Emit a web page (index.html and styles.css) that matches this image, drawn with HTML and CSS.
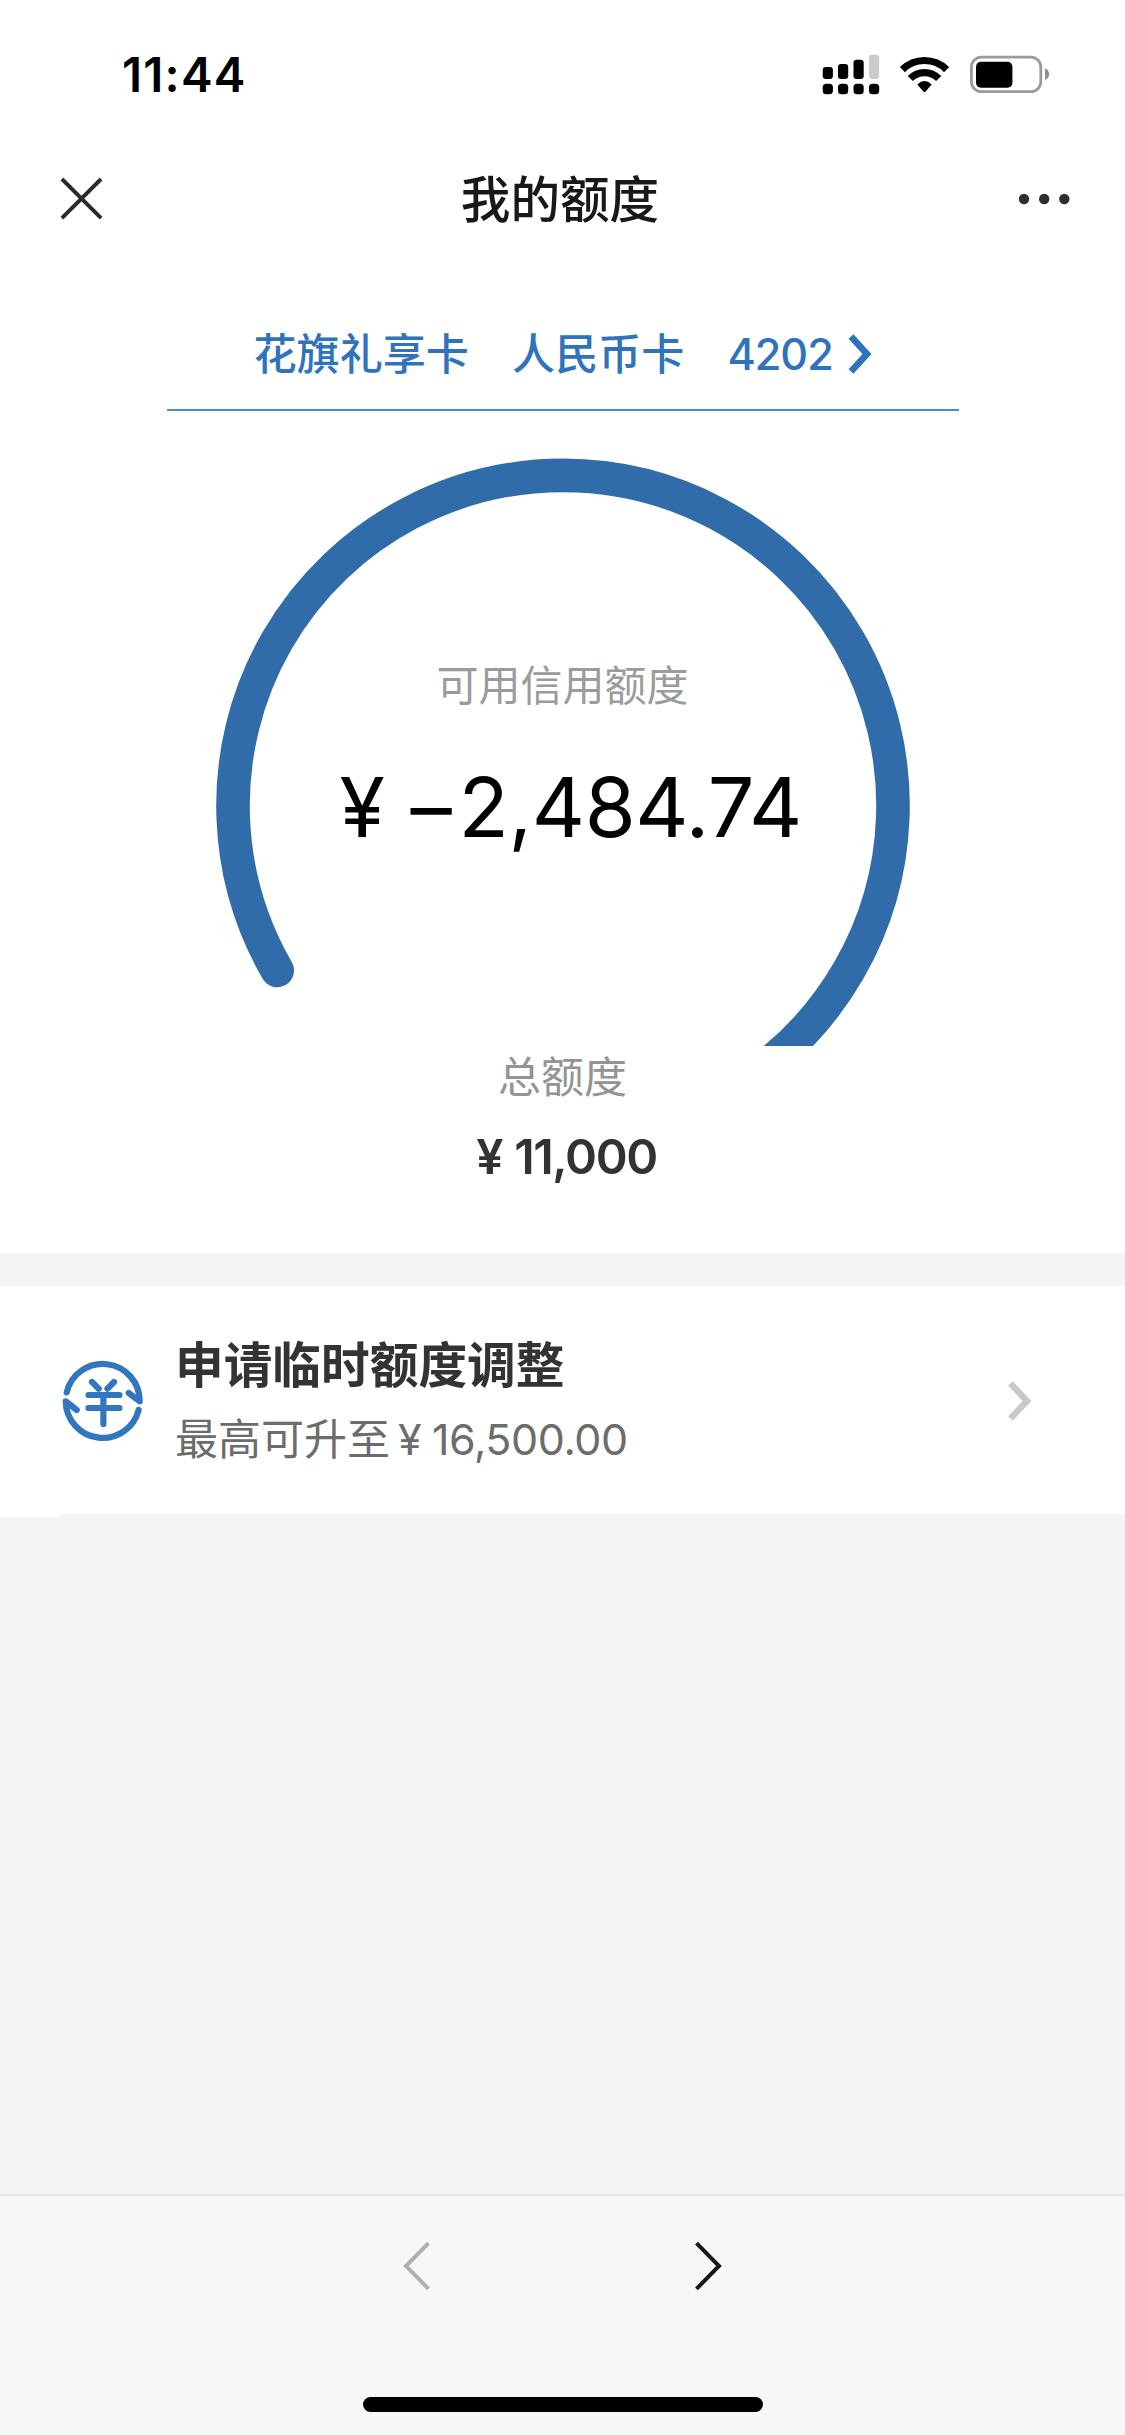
FILE: index.html
```html
<!DOCTYPE html>
<html lang="zh-CN">
<head>
<meta charset="utf-8">
<title>我的额度</title>
<link rel="stylesheet" href="styles.css">
</head>
<body>
<div class="screen">
  <header class="status-bar">
    <span class="clock">11:44</span>
    <svg class="status-icons" viewBox="0 0 240 50" width="240" height="50">
      <g fill="#000">
        <rect x="2.7" y="17" width="10.2" height="12" rx="3"/>
        <rect x="18" y="14" width="10.2" height="15" rx="3"/>
        <rect x="33.5" y="9.7" width="10.2" height="19.3" rx="3"/>
        <rect x="49" y="4.7" width="10.2" height="24.3" rx="3" fill="#cbcbcb"/>
        <rect x="2.7" y="33.7" width="10.2" height="10.6" rx="3.6"/>
        <rect x="18" y="33.7" width="10.2" height="10.6" rx="3.6"/>
        <rect x="33.5" y="33.7" width="10.2" height="10.6" rx="3.6"/>
        <rect x="49" y="33.7" width="10.2" height="10.6" rx="3.6"/>
      </g>
      <g fill="none" stroke="#000" stroke-width="7.2">
        <path d="M82.4 19.6A31.4 31.4 0 0 1 126.6 19.6"/>
        <path d="M90.3 28.6A19.7 19.7 0 0 1 118.7 28.6"/>
      </g>
      <path d="M97.3 34.4Q104.5 27.6 111.7 34.4L105.4 41.7Q104.5 42.6 103.6 41.7Z" fill="#000"/>
      <rect x="151.4" y="7.1" width="69.4" height="34.6" rx="10" fill="none" stroke="#9b9b9b" stroke-width="2.8"/>
      <rect x="156" y="11.7" width="36.4" height="26" rx="5" fill="#000"/>
      <path d="M225 18.2C230.4 20 230.4 28.2 225 30Z" fill="#8e8e8e"/>
    </svg>
  </header>

  <nav class="nav-bar">
    <svg class="close" viewBox="0 0 44 44" width="44" height="44"><path d="M2.9 2L42.1 41.2M42.1 2L2.9 41.2" fill="none" stroke="#2b2b2b" stroke-width="3.9"/></svg>
    <h1 class="nav-title">我的额度</h1>
    <svg class="more" viewBox="0 0 54 12" width="54" height="12"><g fill="#2f2f2f"><circle cx="7" cy="6" r="5.2"/><circle cx="27.2" cy="6" r="5.2"/><circle cx="47.3" cy="6" r="5.2"/></g></svg>
  </nav>

  <main class="quota">
    <div class="card-picker">
      <span class="card-name">花旗礼享卡　人民币卡　<span class="card-tail">4202</span></span>
      <svg class="picker-arrow" viewBox="0 0 26 42" width="26" height="42"><path d="M3 3.5L19 21L3 38.5" fill="none" stroke="#2f73be" stroke-width="6.6"/></svg>
    </div>
    <section class="gauge">
      <svg class="gauge-ring" viewBox="0 0 700 588" width="700" height="588"><path d="M64.2 512.4A330 330 0 1 1 635.8 512.4A330 330 0 0 1 350 677.4" fill="none" stroke="#306caa" stroke-width="33.6" stroke-linecap="round"/></svg>
      <div class="gauge-text">
        <div class="gauge-label">可用信用额度</div>
        <div class="gauge-amount"><span class="yen">¥</span><span class="dash">–</span><span class="figure">2,484.74</span></div>
      </div>
    </section>
    <div class="total-label">总额度</div>
    <div class="total-amount"><span class="total-yen">¥</span><span class="total-figure">11,000</span></div>
  </main>

  <section class="menu">
    <a class="menu-item">
      <svg class="yuan-icon" viewBox="0 0 90 90" width="90" height="90"><g fill="none" stroke="#3276c0" stroke-width="6.2" stroke-linecap="round" stroke-linejoin="round">
        <path d="M9.7 37.4A37 37 0 0 1 82.7 46.4L71.7 38"/>
        <path d="M81.6 54.9A37 37 0 0 1 8.7 46.3L19.7 55"/>
        <path d="M31.5 40H62.5M31.5 53H62.5M46.4 40V69M35 27L41.7 33.7M57 27L50.5 33.7"/>
      </g></svg>
      <div class="menu-text">
        <div class="menu-title">申请临时额度调整</div>
        <div class="menu-sub">最高可升至<span class="sub-yen">¥</span><span class="sub-figure">16,500.00</span></div>
      </div>
      <svg class="menu-arrow" viewBox="0 0 26 42" width="26" height="42"><path d="M2.5 4.5L19 22L2.5 39.5" fill="none" stroke="#c7c7cc" stroke-width="6.4"/></svg>
    </a>
  </section>

  <div class="blank"></div>

  <footer class="toolbar">
    <div class="history">
      <svg viewBox="0 0 30 52" width="30" height="52"><path d="M26.5 3.2L4 26L26.5 48.8" fill="none" stroke="#b0b0b0" stroke-width="4"/></svg>
      <svg viewBox="0 0 30 52" width="30" height="52"><path d="M2.5 3.2L25 26L2.5 48.8" fill="none" stroke="#181818" stroke-width="4"/></svg>
    </div>
    <div class="home-indicator"></div>
  </footer>
</div>
</body>
</html>
```

FILE: styles.css
```css
* { box-sizing: border-box; }
body {
  margin: 0;
  background: #f4f4f4;
  font-family: Inter, "Noto Sans CJK SC", sans-serif;
}
svg { display: block; flex: none; }
.screen {
  width: 1125px;
  height: 2435px;
  display: flex;
  flex-direction: column;
  overflow: hidden;
}
.status-bar {
  height: 132px;
  flex: none;
  background: #fff;
  display: flex;
  justify-content: space-between;
  align-items: flex-start;
  padding: 50px 65px 0 122px;
}
.clock {
  font-size: 47.5px;
  line-height: 50px;
  font-weight: 600;
  letter-spacing: 1.2px;
  color: #000;
}
.nav-bar {
  height: 138px;
  flex: none;
  background: #fff;
  display: flex;
  justify-content: space-between;
  align-items: center;
  padding: 0 54px 4px 59px;
}
.nav-title {
  margin: 0;
  padding-top: 2px;
  font-size: 49.6px;
  line-height: 72px;
  font-weight: 500;
  color: #181818;
}
.quota {
  height: 983px;
  flex: none;
  background: #fff;
  display: flex;
  flex-direction: column;
  align-items: center;
}
.card-picker {
  width: 792px;
  height: 141px;
  flex: none;
  border-bottom: 2px solid #4a8dca;
  color: #2f73be;
  display: flex;
  align-items: center;
  gap: 15px;
  padding: 28px 0 0 87px;
}
.card-name {
  font-size: 43.1px;
  line-height: 62px;
  font-weight: 500;
  white-space: nowrap;
}
.card-tail { letter-spacing: -1px; }
.gauge {
  width: 700px;
  height: 588px;
  margin-top: 47px;
  flex: none;
  display: grid;
}
.gauge-ring, .gauge-text { grid-area: 1 / 1; }
.gauge-text { padding-top: 197px; }
.gauge-label {
  font-size: 42px;
  line-height: 62px;
  font-weight: 400;
  color: #9b9b9b;
  text-align: center;
}
.gauge-amount {
  margin-top: 40px;
  padding-left: 127px;
  display: flex;
  font-size: 82.5px;
  line-height: 100px;
  color: #000;
  white-space: nowrap;
}
.yen { width: 71px; }
.dash { width: 48px; }
.figure { letter-spacing: -0.4px; }
.total-label {
  font-size: 43px;
  line-height: 62px;
  font-weight: 400;
  color: #949494;
}
.total-amount {
  margin-top: 19px;
  padding-left: 8px;
  display: flex;
  font-size: 48.5px;
  line-height: 60px;
  font-weight: 600;
  color: #333;
}
.total-yen { width: 38px; }
.total-figure { letter-spacing: -1.4px; }
.menu {
  flex: none;
  margin-top: 33px;
}
.menu-item {
  height: 228px;
  display: flex;
  align-items: center;
  padding: 0 91px 0 57px;
  background: #fff;
}
.menu-text { flex: 1; padding: 0 0 0 28px; }
.menu-title {
  font-size: 48.7px;
  line-height: 70px;
  font-weight: 700;
  color: #333;
}
.menu-sub {
  margin-top: 7px;
  display: flex;
  font-size: 43px;
  line-height: 62px;
  font-weight: 400;
  color: #6c6c6c;
}
.sub-yen { width: 34px; margin-left: 8px; }
.sub-figure { letter-spacing: -0.4px; }
/* The divider inset leaves a short white lip under the icon column. */
.menu::after {
  content: "";
  display: block;
  width: 61px;
  height: 3px;
  background: #fff;
}
.blank { flex: 1; }
.toolbar {
  height: 241px;
  flex: none;
  border-top: 2px solid #e6e6e6;
  background: #f7f7f7;
  display: flex;
  flex-direction: column;
  align-items: center;
  justify-content: space-between;
  padding: 44px 0 23px;
}
.history { display: flex; gap: 262px; }
.home-indicator {
  width: 400px;
  height: 15px;
  border-radius: 8px;
  background: #000;
}
```
